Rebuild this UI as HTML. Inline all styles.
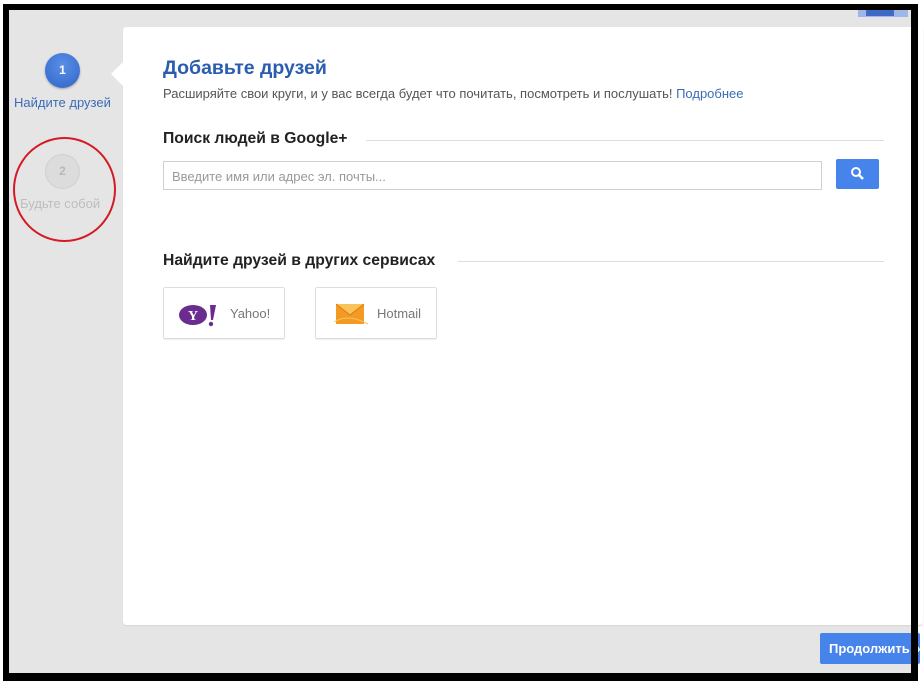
<!DOCTYPE html>
<html><head><meta charset="utf-8"><style>
*{margin:0;padding:0;box-sizing:border-box}
body{width:924px;height:685px;background:#fff;position:relative;overflow:hidden;font-family:"Liberation Sans",Arial,sans-serif}
.frame{position:absolute;left:3px;top:4px;width:915px;height:677px;background:#000}
.gray{position:absolute;left:9px;top:10px;width:902px;height:663px;background:#e5e5e5;overflow:hidden}
.topbar{position:absolute;left:858px;top:10px;width:50px;height:7px;background:#9db8e8}
.topbar i{position:absolute;left:8px;top:0;width:28px;height:6px;background:#3f6bc6}
.panel{position:absolute;left:123px;top:27px;width:800px;height:598px;background:#fff;border-radius:3px;box-shadow:0 1px 1px #d5d5d5}
.arrow{position:absolute;left:111px;top:62px;width:0;height:0;border-top:12px solid transparent;border-bottom:12px solid transparent;border-right:12px solid #fff}
.c1{position:absolute;left:45px;top:53px;width:35px;height:35px;border-radius:50%;background:radial-gradient(circle at 50% 35%,#5a8ee6,#2f65c8);box-shadow:0 1px 2px rgba(0,0,0,.3);color:#fff;font-size:12px;font-weight:bold;text-align:center;line-height:35px}
.c2{position:absolute;left:45px;top:154px;width:35px;height:35px;border-radius:50%;background:#dcdcdc;border:1px solid #d0d0d0;color:#b8b8b8;font-size:12px;font-weight:bold;text-align:center;line-height:33px}
.l1{position:absolute;left:14px;top:95px;font-size:13px;color:#3b6cb8}
.l2{position:absolute;left:20px;top:196px;font-size:13px;color:#bdbdbd}
.red{position:absolute;left:13px;top:137px;width:103px;height:105px;border:2px solid #d41a24;border-radius:50%}
h1{position:absolute;left:163px;top:57px;font-size:19.5px;color:#2a5db0;font-weight:bold}
.sub{position:absolute;left:163px;top:86px;font-size:13px;color:#555}
.sub a{color:#3b6cb8;text-decoration:none}
h2{position:absolute;left:163px;top:130px;font-size:15.7px;font-weight:bold;color:#222}
.line{position:absolute;height:1px;background:#ddd}
.inp{position:absolute;left:163px;top:161px;width:659px;height:29px;border:1px solid #d0d0d0;font-size:13px;color:#999;padding:7px 8px}
.sbtn{position:absolute;left:836px;top:159px;width:43px;height:30px;background:#4683ea;border-radius:2px}
.svc{position:absolute;top:287px;width:122px;height:52px;border:1px solid #ddd;border-radius:2px;box-shadow:0 1px 1px #eee;font-size:13px;color:#777}
.cont{position:absolute;left:820px;top:633px;width:100px;height:31px;background:#4683ea;border-radius:2px;color:#fff;font-weight:bold;font-size:13px;padding:8px 0 0 9px;white-space:nowrap}
</style></head><body>
<div class="frame"></div>
<div class="gray"></div>
<div class="topbar"><i></i></div>
<div class="panel"></div>
<div class="arrow"></div>
<div class="c1">1</div>
<div class="l1">Найдите друзей</div>
<div class="c2">2</div>
<div class="l2">Будьте собой</div>
<div class="red"></div>
<h1>Добавьте друзей</h1>
<div class="sub">Расширяйте свои круги, и у вас всегда будет что почитать, посмотреть и послушать! <a>Подробнее</a></div>
<h2>Поиск людей в Google+</h2>
<div class="line" style="left:366px;top:140px;width:518px"></div>
<div class="inp">Введите имя или адрес эл. почты...</div>
<div class="sbtn"><svg width="43" height="30"><circle cx="20" cy="13" r="4" stroke="#fff" stroke-width="2" fill="none"/><path d="M23 16 L27 20" stroke="#fff" stroke-width="2.5"/></svg></div>
<h2 style="top:252px">Найдите друзей в других сервисах</h2>
<div class="line" style="left:458px;top:261px;width:426px"></div>
<div class="svc" style="left:163px"><svg style="position:absolute;left:15px;top:14px" width="45" height="26"><ellipse cx="14" cy="13" rx="14" ry="10" fill="#6b2c8f"/><text x="14" y="18" font-family="Liberation Serif" font-weight="bold" font-size="14" fill="#fff" text-anchor="middle">Y</text><path d="M31 3 L37 3 L34 18 L32 18Z" fill="#6b2c8f"/><circle cx="32" cy="22" r="2.2" fill="#6b2c8f"/></svg><span style="position:absolute;left:66px;top:18px">Yahoo!</span></div>
<div class="svc" style="left:315px"><svg style="position:absolute;left:18px;top:12px" width="34" height="28"><rect x="2" y="4" width="28" height="20" fill="#f39a23"/><path d="M2 4 L16 15 L30 4" fill="#fbc25a" stroke="#e07a10"/><path d="M0 22 Q14 13 34 24" stroke="#f6c36a" fill="none"/></svg><span style="position:absolute;left:61px;top:18px">Hotmail</span></div>
<div class="cont">Продолжить »</div>
<div style="position:absolute;left:911px;top:4px;width:7px;height:677px;background:#000"></div>
</body></html>
